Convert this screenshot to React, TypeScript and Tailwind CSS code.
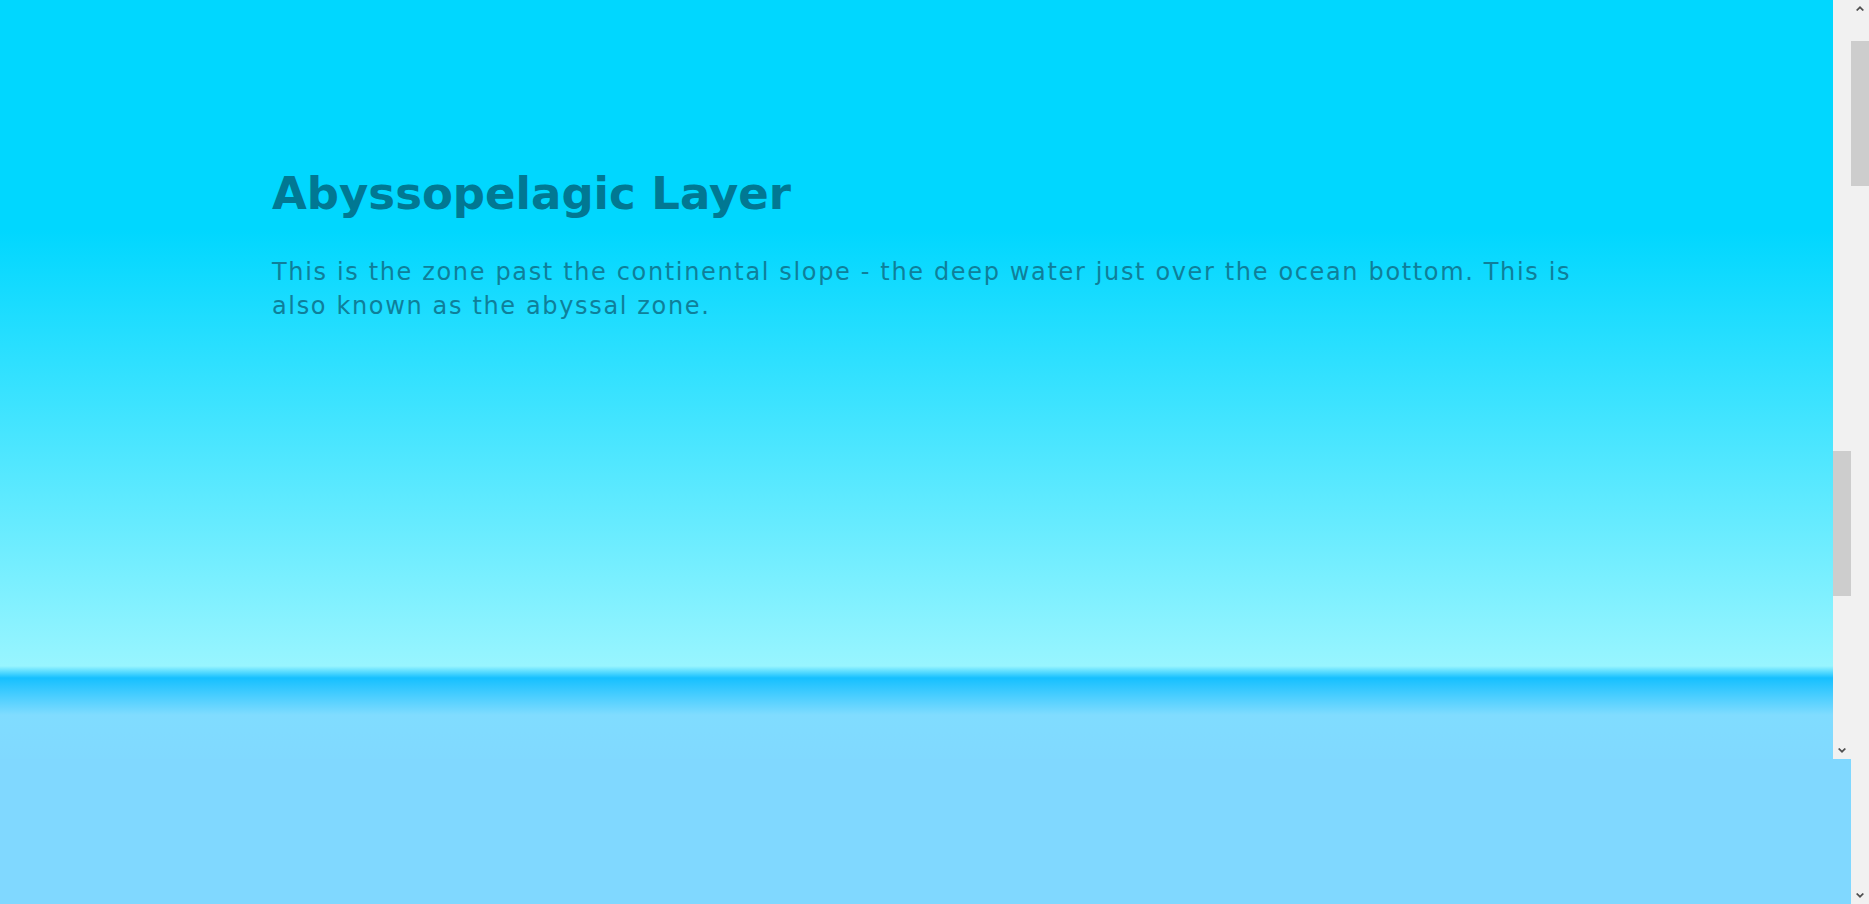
import React from "react";

function ChevronUp() {
  return (
    <svg width="8" height="5" viewBox="0 0 8 5" className="block">
      <path d="M0 4 L4 0 L8 4 L6.6 5 L4 2.4 L1.4 5 Z" fill="#505050" />
    </svg>
  );
}

function ChevronDown() {
  return (
    <svg width="8" height="5" viewBox="0 0 8 5" className="block">
      <path d="M0 1 L4 5 L8 1 L6.6 0 L4 2.6 L1.4 0 Z" fill="#505050" />
    </svg>
  );
}

export default function App() {
  return (
    <div className="flex w-[1869px] h-[904px] overflow-hidden bg-[#80d8ff]">
      <div className="flex flex-col w-[1851px] h-[904px]">
        <div className="flex h-[759px] w-[1851px]">
          <div
            className="w-[1833px] h-[759px] bg-[linear-gradient(to_bottom,#00d7ff_0px,#00d7ff_230px,#98f5ff_666px,#16c0ff_678px,#80dcff_715px,#80d9ff_759px)]"
            style={{ fontFamily: '"DejaVu Sans", Verdana, sans-serif' }}
          >
            <div className="pl-[272px] pt-[167px] w-[1592px]">
              <h1 className="text-[45px] leading-[54px] font-bold text-[#017893]">
                Abyssopelagic Layer
              </h1>
              <p className="mt-[34px] text-[24px] leading-[34px] tracking-[1.65px] text-[#0f7f9a] w-[1320px]">
                This is the zone past the continental slope - the deep water just over the ocean bottom. This is also known as the abyssal zone.
              </p>
            </div>
          </div>
          <div className="flex flex-col w-[18px] h-[759px] bg-[#f1f1f1]">
            <div className="h-[451px]" />
            <div className="h-[145px] bg-[#cdcdcd]" />
            <div className="flex-1" />
            <div className="h-[17px] flex items-center justify-center">
              <ChevronDown />
            </div>
          </div>
        </div>
        <div className="flex-1 bg-[#80d8ff]" />
      </div>
      <div className="flex flex-col w-[18px] h-[904px] bg-[#f1f1f1]">
        <div className="h-[17px] flex items-center justify-center">
          <ChevronUp />
        </div>
        <div className="h-[24px]" />
        <div className="h-[145px] bg-[#cdcdcd]" />
        <div className="flex-1" />
        <div className="h-[17px] flex items-center justify-center">
          <ChevronDown />
        </div>
      </div>
    </div>
  );
}
